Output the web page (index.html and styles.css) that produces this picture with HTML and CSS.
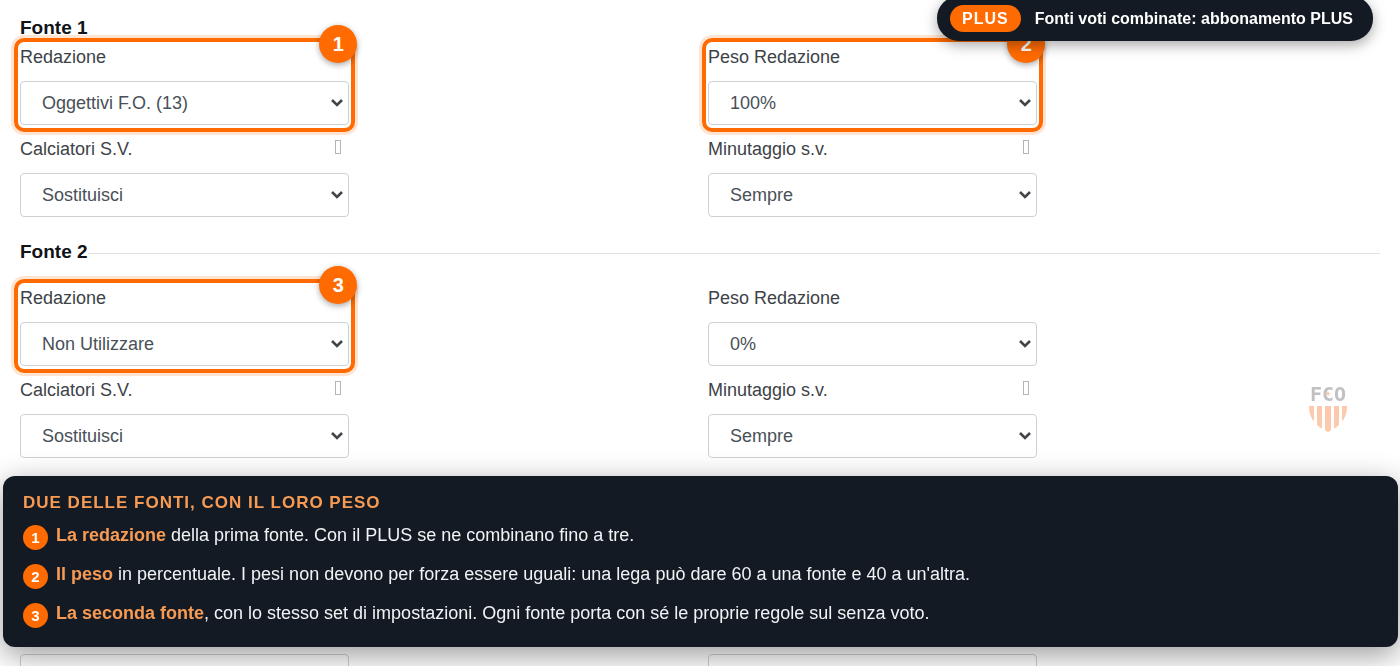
FILE: index.html
```
<!DOCTYPE html>
<html lang="it">
<head>
    <meta charset="UTF-8">
    <meta name="viewport" content="width=device-width, initial-scale=1.0">
    <title>Fonti voti</title>
    <link rel="stylesheet" href="styles.css">
</head>
<body>
    <form class="sources">
        <section class="source source-first">
            <h2 class="source-title">Fonte 1</h2>
            <div class="fields">
                <div class="field highlight">
                    <label for="redazione1">Redazione</label>
                    <select id="redazione1"><option>Oggettivi F.O. (13)</option></select>
                    <span class="marker">1</span>
                </div>
                <div class="field highlight">
                    <label for="peso1">Peso Redazione</label>
                    <select id="peso1"><option>100%</option></select>
                    <span class="marker">2</span>
                </div>
                <div class="field">
                    <div class="label-row">
                        <label for="calciatori1">Calciatori S.V.</label>
                        <span class="info"></span>
                    </div>
                    <select id="calciatori1"><option>Sostituisci</option></select>
                </div>
                <div class="field">
                    <div class="label-row">
                        <label for="minutaggio1">Minutaggio s.v.</label>
                        <span class="info"></span>
                    </div>
                    <select id="minutaggio1"><option>Sempre</option></select>
                </div>
            </div>
        </section>

        <section class="source">
            <h2 class="source-title">Fonte 2</h2>
            <div class="fields">
                <div class="field highlight">
                    <label for="redazione2">Redazione</label>
                    <select id="redazione2"><option>Non Utilizzare</option></select>
                    <span class="marker">3</span>
                </div>
                <div class="field">
                    <label for="peso2">Peso Redazione</label>
                    <select id="peso2"><option>0%</option></select>
                </div>
                <div class="field">
                    <div class="label-row">
                        <label for="calciatori2">Calciatori S.V.</label>
                        <span class="info"></span>
                    </div>
                    <select id="calciatori2"><option>Sostituisci</option></select>
                </div>
                <div class="field">
                    <div class="label-row">
                        <label for="minutaggio2">Minutaggio s.v.</label>
                        <span class="info"></span>
                    </div>
                    <select id="minutaggio2"><option>Sempre</option></select>
                </div>
            </div>
        </section>

        <!-- Mostly behind the legend, only the last selects show below it -->
        <section class="source source-covered">
            <div class="fields">
                <div class="field">
                    <select aria-label="Calciatori S.V."><option>Sostituisci</option></select>
                </div>
                <div class="field">
                    <select aria-label="Minutaggio s.v."><option>Sempre</option></select>
                </div>
            </div>
        </section>
    </form>

    <!-- Floating logo -->
    <svg class="logo" width="40" height="50" viewBox="0 0 40 50" aria-label="FCO">
        <text class="logo-text" x="20" y="19" text-anchor="middle">FCO</text>
        <path d="M20 9l1 2h2l-2 1 1 2-2-1-2 1 1-2-2-1h2z" fill="#fdc9ad"/>
        <clipPath id="shield"><path d="M1 24H39C39 34 35 43 20 50C5 43 1 34 1 24Z"/></clipPath>
        <g clip-path="url(#shield)" fill="#fdc9ad">
            <rect x="1" y="24" width="5" height="26"/>
            <rect x="9" y="24" width="5" height="26"/>
            <rect x="17" y="24" width="6" height="26"/>
            <rect x="26" y="24" width="5" height="26"/>
            <rect x="34" y="24" width="5" height="26"/>
        </g>
    </svg>

    <div class="plus-banner">
        <span class="plus-tag">PLUS</span>
        <span>Fonti voti combinate: abbonamento PLUS</span>
    </div>

    <aside class="legend">
        <h3 class="legend-title">Due delle fonti, con il loro peso</h3>
        <ul class="legend-list">
            <li><span class="number">1</span><p><strong>La redazione</strong> della prima fonte. Con il PLUS se ne combinano fino a tre.</p></li>
            <li><span class="number">2</span><p><strong>Il peso</strong> in percentuale. I pesi non devono per forza essere uguali: una lega può dare 60 a una fonte e 40 a un'altra.</p></li>
            <li><span class="number">3</span><p><strong>La seconda fonte</strong>, con lo stesso set di impostazioni. Ogni fonte porta con sé le proprie regole sul senza voto.</p></li>
        </ul>
    </aside>
</body>
</html>
```
FILE: styles.css
```
* {
    box-sizing: border-box;
}

body {
    height: 100vh;
    margin: 0;
    font-family: "Liberation Sans", Arial, sans-serif;
    font-size: 18px;
    color: #3d4248;
    background: #fff;
    overflow: hidden;
}

.sources {
    height: 100%;
    padding: 16px 20px 0;
    overflow: hidden;
}

.source {
    padding-top: 11px;
}

.source-first {
    padding-top: 0;
}

.source-covered {
    padding-top: 184px;
}

.source-title {
    display: flex;
    align-items: center;
    margin: 0 0 22px;
    font-size: 19px;
    line-height: 24px;
    color: #101317;
}

.source-title::after {
    content: "";
    flex: 1;
    height: 1px;
    margin-top: 2px;
    background: #dfe1e3;
}

.source-first .source-title {
    margin-bottom: 5px;
}

.source-first .source-title::after {
    display: none;
}

.fields {
    display: grid;
    grid-template-columns: 1fr 1fr;
    column-gap: 16px;
}

.field {
    position: relative;
    width: 49%;
    margin-bottom: 12px;
}

.field label {
    display: block;
    line-height: 24px;
    margin-bottom: 12px;
}

.label-row {
    display: flex;
    justify-content: space-between;
}

.info {
    width: 6px;
    height: 14px;
    margin: 3px 8px 0 0;
    border: 1px solid #b4b4b4;
}

.field select {
    display: block;
    width: 100%;
    height: 44px;
    padding: 0 24px 0 21px;
    border: 1px solid #ced1d4;
    border-radius: 4px;
    appearance: none;
    background: #fff url("data:image/svg+xml,%3Csvg xmlns='http://www.w3.org/2000/svg' width='12' height='8' fill='none' stroke='%23424549' stroke-width='2.6'%3E%3Cpath d='M1 1l5 5 5-5'/%3E%3C/svg%3E") no-repeat right 5px center;
    font-family: inherit;
    font-size: 18px;
    color: #495057;
}

/* Orange frame around the fields explained in the legend */
.highlight::after {
    content: "";
    position: absolute;
    inset: -7px -6px;
    border: 4px solid #ff6b00;
    border-radius: 10px;
    box-shadow: 0 0 0 3px rgba(255, 107, 0, 0.18);
    pointer-events: none;
}

.marker {
    position: absolute;
    top: -20px;
    right: -8px;
    z-index: 1;
    width: 38px;
    height: 38px;
    border-radius: 50%;
    background: #ff6b00;
    box-shadow: 0 2px 6px rgba(0, 0, 0, 0.35);
    color: #fff;
    font-size: 20px;
    font-weight: bold;
    line-height: 38px;
    text-align: center;
}

.logo {
    position: fixed;
    right: 52px;
    bottom: 234px;
}

.logo-text {
    font-family: "DejaVu Sans Mono", monospace;
    font-size: 20px;
    font-weight: bold;
    fill: #bfc1c3;
}

.plus-banner {
    position: fixed;
    top: -4px;
    right: 27px;
    z-index: 2;
    display: flex;
    align-items: center;
    gap: 14px;
    padding: 9px 20px 9px 13px;
    border-radius: 22px;
    background: #141a23;
    box-shadow: 0 4px 14px rgba(0, 0, 0, 0.35);
    color: #fff;
    font-size: 16px;
    font-weight: bold;
    line-height: 27px;
}

.plus-tag {
    padding: 0 12px;
    border-radius: 14px;
    background: #ff6b00;
    letter-spacing: 1px;
}

.legend {
    position: fixed;
    left: 3px;
    right: 2px;
    bottom: 19px;
    z-index: 2;
    padding: 17px 20px 19px;
    border-radius: 12px;
    background: #141a23;
    box-shadow: 0 8px 30px rgba(0, 0, 0, 0.4);
    color: #f1f3f5;
}

.legend-title {
    margin: 0 0 8px;
    font-size: 17px;
    line-height: 20px;
    letter-spacing: 1px;
    text-transform: uppercase;
    color: #f79b54;
}

.legend-list {
    display: flex;
    flex-direction: column;
    gap: 10px;
    margin: 0;
    padding: 0;
    list-style: none;
}

.legend-list li {
    display: flex;
    gap: 8px;
    line-height: 28px;
}

.legend-list p {
    margin: 0;
}

.legend-list strong {
    color: #f79b54;
}

.number {
    width: 25px;
    height: 25px;
    margin-top: 4px;
    flex: none;
    border-radius: 50%;
    background: #ff6b00;
    color: #fff;
    font-size: 15px;
    font-weight: bold;
    line-height: 25px;
    text-align: center;
}
```
